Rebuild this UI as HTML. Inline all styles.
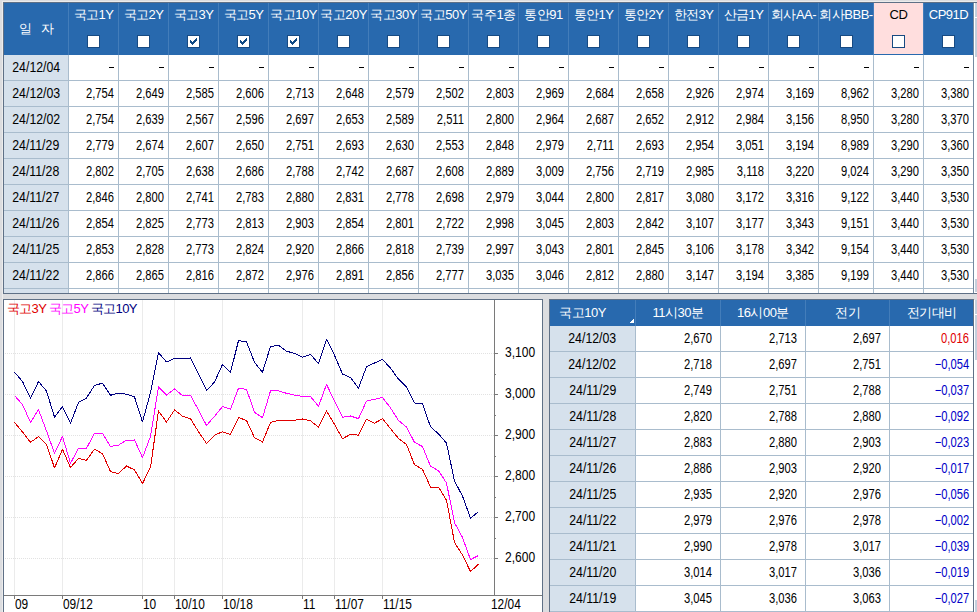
<!DOCTYPE html><html><head><meta charset="utf-8"><style>
html,body{margin:0;padding:0}
body{width:977px;height:612px;overflow:hidden;position:relative;background:#dcdde0;font-family:"Liberation Sans",sans-serif;}
body div{position:absolute;box-sizing:border-box}
.t{white-space:nowrap;font-size:13px;letter-spacing:-0.5px;color:#000}
.n{white-space:nowrap;font-size:14px;color:#000}
.r{text-align:right}
.c{text-align:center}
.cb{width:13px;height:13px;background:#fff;border:1px solid #174a82}
</style></head><body>

<div style="left:2px;top:1px;width:975px;height:300px;border-left:1px solid #ececec;border-top:1px solid #ececec"></div>
<div style="left:3px;top:2px;width:974px;height:292px;border-left:1px solid #5f7086;border-top:1px solid #5f7086;border-bottom:1px solid #5f7086"></div>
<div style="left:4px;top:3px;width:969px;height:290px;background:#fff"></div>
<div style="left:4px;top:3px;width:969px;height:52px;background:#2869ae"></div>
<div style="left:874px;top:3px;width:49px;height:51px;background:#ffdede"></div>
<div style="left:4px;top:55px;width:64px;height:238px;background:#d6e1ec"></div>
<div style="left:68px;top:3px;width:1px;height:52px;background:#437dba"></div>
<div style="left:68px;top:55px;width:1px;height:238px;background:#a9bccd"></div>
<div style="left:118px;top:3px;width:1px;height:52px;background:#437dba"></div>
<div style="left:118px;top:55px;width:1px;height:238px;background:#a9bccd"></div>
<div style="left:168px;top:3px;width:1px;height:52px;background:#437dba"></div>
<div style="left:168px;top:55px;width:1px;height:238px;background:#a9bccd"></div>
<div style="left:218px;top:3px;width:1px;height:52px;background:#437dba"></div>
<div style="left:218px;top:55px;width:1px;height:238px;background:#a9bccd"></div>
<div style="left:268px;top:3px;width:1px;height:52px;background:#437dba"></div>
<div style="left:268px;top:55px;width:1px;height:238px;background:#a9bccd"></div>
<div style="left:318px;top:3px;width:1px;height:52px;background:#437dba"></div>
<div style="left:318px;top:55px;width:1px;height:238px;background:#a9bccd"></div>
<div style="left:368px;top:3px;width:1px;height:52px;background:#437dba"></div>
<div style="left:368px;top:55px;width:1px;height:238px;background:#a9bccd"></div>
<div style="left:418px;top:3px;width:1px;height:52px;background:#437dba"></div>
<div style="left:418px;top:55px;width:1px;height:238px;background:#a9bccd"></div>
<div style="left:468px;top:3px;width:1px;height:52px;background:#437dba"></div>
<div style="left:468px;top:55px;width:1px;height:238px;background:#a9bccd"></div>
<div style="left:518px;top:3px;width:1px;height:52px;background:#437dba"></div>
<div style="left:518px;top:55px;width:1px;height:238px;background:#a9bccd"></div>
<div style="left:568px;top:3px;width:1px;height:52px;background:#437dba"></div>
<div style="left:568px;top:55px;width:1px;height:238px;background:#a9bccd"></div>
<div style="left:618px;top:3px;width:1px;height:52px;background:#437dba"></div>
<div style="left:618px;top:55px;width:1px;height:238px;background:#a9bccd"></div>
<div style="left:668px;top:3px;width:1px;height:52px;background:#437dba"></div>
<div style="left:668px;top:55px;width:1px;height:238px;background:#a9bccd"></div>
<div style="left:718px;top:3px;width:1px;height:52px;background:#437dba"></div>
<div style="left:718px;top:55px;width:1px;height:238px;background:#a9bccd"></div>
<div style="left:768px;top:3px;width:1px;height:52px;background:#437dba"></div>
<div style="left:768px;top:55px;width:1px;height:238px;background:#a9bccd"></div>
<div style="left:818px;top:3px;width:1px;height:52px;background:#437dba"></div>
<div style="left:818px;top:55px;width:1px;height:238px;background:#a9bccd"></div>
<div style="left:873px;top:3px;width:1px;height:52px;background:#437dba"></div>
<div style="left:873px;top:55px;width:1px;height:238px;background:#a9bccd"></div>
<div style="left:923px;top:3px;width:1px;height:52px;background:#437dba"></div>
<div style="left:923px;top:55px;width:1px;height:238px;background:#a9bccd"></div>
<div style="left:973px;top:3px;width:1px;height:52px;background:#437dba"></div>
<div style="left:973px;top:55px;width:1px;height:238px;background:#a9bccd"></div>
<div style="left:4px;top:80px;width:969px;height:1px;background:#a9bccd"></div>
<div style="left:4px;top:106px;width:969px;height:1px;background:#a9bccd"></div>
<div style="left:4px;top:132px;width:969px;height:1px;background:#a9bccd"></div>
<div style="left:4px;top:158px;width:969px;height:1px;background:#a9bccd"></div>
<div style="left:4px;top:184px;width:969px;height:1px;background:#a9bccd"></div>
<div style="left:4px;top:210px;width:969px;height:1px;background:#a9bccd"></div>
<div style="left:4px;top:236px;width:969px;height:1px;background:#a9bccd"></div>
<div style="left:4px;top:262px;width:969px;height:1px;background:#a9bccd"></div>
<div style="left:4px;top:288px;width:969px;height:1px;background:#a9bccd"></div>
<div style="left:973px;top:3px;width:4px;height:290px;background:#fff"></div>
<div style="left:973px;top:3px;width:1px;height:290px;background:#7389a0"></div>
<div style="left:975px;top:3px;width:2px;height:54px;background:#c5cfdc"></div>
<div style="left:975px;top:17px;width:2px;height:1px;background:#fff"></div>
<div style="left:975px;top:279px;width:2px;height:13px;background:#c5cfdc"></div>
<div class="t" style="left:69px;top:7px;width:49px;height:16px;line-height:16px;text-align:center;color:#fff">국고1Y</div>
<div class="cb" style="left:87px;top:35px"></div>
<div class="t" style="left:119px;top:7px;width:49px;height:16px;line-height:16px;text-align:center;color:#fff">국고2Y</div>
<div class="cb" style="left:137px;top:35px"></div>
<div class="t" style="left:169px;top:7px;width:49px;height:16px;line-height:16px;text-align:center;color:#fff">국고3Y</div>
<div class="cb" style="left:187px;top:35px"></div>
<svg style="position:absolute;left:187px;top:35px" width="13" height="13" shape-rendering="crispEdges" fill="#104a85"><rect x="3" y="5" width="1" height="3"/><rect x="4" y="6" width="1" height="3"/><rect x="5" y="7" width="1" height="3"/><rect x="6" y="6" width="1" height="3"/><rect x="7" y="5" width="1" height="3"/><rect x="8" y="4" width="1" height="3"/><rect x="9" y="3" width="1" height="3"/></svg>
<div class="t" style="left:219px;top:7px;width:49px;height:16px;line-height:16px;text-align:center;color:#fff">국고5Y</div>
<div class="cb" style="left:237px;top:35px"></div>
<svg style="position:absolute;left:237px;top:35px" width="13" height="13" shape-rendering="crispEdges" fill="#104a85"><rect x="3" y="5" width="1" height="3"/><rect x="4" y="6" width="1" height="3"/><rect x="5" y="7" width="1" height="3"/><rect x="6" y="6" width="1" height="3"/><rect x="7" y="5" width="1" height="3"/><rect x="8" y="4" width="1" height="3"/><rect x="9" y="3" width="1" height="3"/></svg>
<div class="t" style="left:269px;top:7px;width:49px;height:16px;line-height:16px;text-align:center;color:#fff">국고10Y</div>
<div class="cb" style="left:287px;top:35px"></div>
<svg style="position:absolute;left:287px;top:35px" width="13" height="13" shape-rendering="crispEdges" fill="#104a85"><rect x="3" y="5" width="1" height="3"/><rect x="4" y="6" width="1" height="3"/><rect x="5" y="7" width="1" height="3"/><rect x="6" y="6" width="1" height="3"/><rect x="7" y="5" width="1" height="3"/><rect x="8" y="4" width="1" height="3"/><rect x="9" y="3" width="1" height="3"/></svg>
<div class="t" style="left:319px;top:7px;width:49px;height:16px;line-height:16px;text-align:center;color:#fff">국고20Y</div>
<div class="cb" style="left:337px;top:35px"></div>
<div class="t" style="left:369px;top:7px;width:49px;height:16px;line-height:16px;text-align:center;color:#fff">국고30Y</div>
<div class="cb" style="left:387px;top:35px"></div>
<div class="t" style="left:419px;top:7px;width:49px;height:16px;line-height:16px;text-align:center;color:#fff">국고50Y</div>
<div class="cb" style="left:437px;top:35px"></div>
<div class="t" style="left:469px;top:7px;width:49px;height:16px;line-height:16px;text-align:center;color:#fff">국주1종</div>
<div class="cb" style="left:487px;top:35px"></div>
<div class="t" style="left:519px;top:7px;width:49px;height:16px;line-height:16px;text-align:center;color:#fff">통안91</div>
<div class="cb" style="left:537px;top:35px"></div>
<div class="t" style="left:569px;top:7px;width:49px;height:16px;line-height:16px;text-align:center;color:#fff">통안1Y</div>
<div class="cb" style="left:587px;top:35px"></div>
<div class="t" style="left:619px;top:7px;width:49px;height:16px;line-height:16px;text-align:center;color:#fff">통안2Y</div>
<div class="cb" style="left:637px;top:35px"></div>
<div class="t" style="left:669px;top:7px;width:49px;height:16px;line-height:16px;text-align:center;color:#fff">한전3Y</div>
<div class="cb" style="left:687px;top:35px"></div>
<div class="t" style="left:719px;top:7px;width:49px;height:16px;line-height:16px;text-align:center;color:#fff">산금1Y</div>
<div class="cb" style="left:737px;top:35px"></div>
<div class="t" style="left:769px;top:7px;width:49px;height:16px;line-height:16px;text-align:center;color:#fff">회사AA-</div>
<div class="cb" style="left:787px;top:35px"></div>
<div class="t" style="left:819px;top:7px;width:54px;height:16px;line-height:16px;text-align:center;color:#fff">회사BBB-</div>
<div class="cb" style="left:840px;top:35px"></div>
<div class="t" style="left:874px;top:7px;width:49px;height:16px;line-height:16px;text-align:center;color:#000">CD</div>
<div class="cb" style="left:892px;top:35px"></div>
<div class="t" style="left:924px;top:7px;width:49px;height:16px;line-height:16px;text-align:center;color:#fff">CP91D</div>
<div class="cb" style="left:942px;top:35px"></div>
<div class="t" style="left:4px;top:3px;width:64px;height:52px;line-height:52px;text-align:center;color:#fff">일&nbsp;&nbsp;&nbsp;자</div>
<div class="n" style="left:4px;top:55px;width:64px;height:25px;line-height:25px;text-align:center;"><span style="display:inline-block;transform:scaleX(0.88);transform-origin:50% 50%">24/12/04</span></div>
<div style="left:109px;top:67px;width:5px;height:1px;background:#000"></div>
<div style="left:159px;top:67px;width:5px;height:1px;background:#000"></div>
<div style="left:209px;top:67px;width:5px;height:1px;background:#000"></div>
<div style="left:259px;top:67px;width:5px;height:1px;background:#000"></div>
<div style="left:309px;top:67px;width:5px;height:1px;background:#000"></div>
<div style="left:359px;top:67px;width:5px;height:1px;background:#000"></div>
<div style="left:409px;top:67px;width:5px;height:1px;background:#000"></div>
<div style="left:459px;top:67px;width:5px;height:1px;background:#000"></div>
<div style="left:509px;top:67px;width:5px;height:1px;background:#000"></div>
<div style="left:559px;top:67px;width:5px;height:1px;background:#000"></div>
<div style="left:609px;top:67px;width:5px;height:1px;background:#000"></div>
<div style="left:659px;top:67px;width:5px;height:1px;background:#000"></div>
<div style="left:709px;top:67px;width:5px;height:1px;background:#000"></div>
<div style="left:759px;top:67px;width:5px;height:1px;background:#000"></div>
<div style="left:809px;top:67px;width:5px;height:1px;background:#000"></div>
<div style="left:864px;top:67px;width:5px;height:1px;background:#000"></div>
<div style="left:914px;top:67px;width:5px;height:1px;background:#000"></div>
<div style="left:964px;top:67px;width:5px;height:1px;background:#000"></div>
<div class="n" style="left:4px;top:81px;width:64px;height:25px;line-height:25px;text-align:center;"><span style="display:inline-block;transform:scaleX(0.88);transform-origin:50% 50%">24/12/03</span></div>
<div class="n" style="left:69px;top:81px;width:45px;height:25px;line-height:25px;text-align:right;"><span style="display:inline-block;transform:scaleX(0.8);transform-origin:100% 50%">2,754</span></div>
<div class="n" style="left:119px;top:81px;width:45px;height:25px;line-height:25px;text-align:right;"><span style="display:inline-block;transform:scaleX(0.8);transform-origin:100% 50%">2,649</span></div>
<div class="n" style="left:169px;top:81px;width:45px;height:25px;line-height:25px;text-align:right;"><span style="display:inline-block;transform:scaleX(0.8);transform-origin:100% 50%">2,585</span></div>
<div class="n" style="left:219px;top:81px;width:45px;height:25px;line-height:25px;text-align:right;"><span style="display:inline-block;transform:scaleX(0.8);transform-origin:100% 50%">2,606</span></div>
<div class="n" style="left:269px;top:81px;width:45px;height:25px;line-height:25px;text-align:right;"><span style="display:inline-block;transform:scaleX(0.8);transform-origin:100% 50%">2,713</span></div>
<div class="n" style="left:319px;top:81px;width:45px;height:25px;line-height:25px;text-align:right;"><span style="display:inline-block;transform:scaleX(0.8);transform-origin:100% 50%">2,648</span></div>
<div class="n" style="left:369px;top:81px;width:45px;height:25px;line-height:25px;text-align:right;"><span style="display:inline-block;transform:scaleX(0.8);transform-origin:100% 50%">2,579</span></div>
<div class="n" style="left:419px;top:81px;width:45px;height:25px;line-height:25px;text-align:right;"><span style="display:inline-block;transform:scaleX(0.8);transform-origin:100% 50%">2,502</span></div>
<div class="n" style="left:469px;top:81px;width:45px;height:25px;line-height:25px;text-align:right;"><span style="display:inline-block;transform:scaleX(0.8);transform-origin:100% 50%">2,803</span></div>
<div class="n" style="left:519px;top:81px;width:45px;height:25px;line-height:25px;text-align:right;"><span style="display:inline-block;transform:scaleX(0.8);transform-origin:100% 50%">2,969</span></div>
<div class="n" style="left:569px;top:81px;width:45px;height:25px;line-height:25px;text-align:right;"><span style="display:inline-block;transform:scaleX(0.8);transform-origin:100% 50%">2,684</span></div>
<div class="n" style="left:619px;top:81px;width:45px;height:25px;line-height:25px;text-align:right;"><span style="display:inline-block;transform:scaleX(0.8);transform-origin:100% 50%">2,658</span></div>
<div class="n" style="left:669px;top:81px;width:45px;height:25px;line-height:25px;text-align:right;"><span style="display:inline-block;transform:scaleX(0.8);transform-origin:100% 50%">2,926</span></div>
<div class="n" style="left:719px;top:81px;width:45px;height:25px;line-height:25px;text-align:right;"><span style="display:inline-block;transform:scaleX(0.8);transform-origin:100% 50%">2,974</span></div>
<div class="n" style="left:769px;top:81px;width:45px;height:25px;line-height:25px;text-align:right;"><span style="display:inline-block;transform:scaleX(0.8);transform-origin:100% 50%">3,169</span></div>
<div class="n" style="left:819px;top:81px;width:50px;height:25px;line-height:25px;text-align:right;"><span style="display:inline-block;transform:scaleX(0.8);transform-origin:100% 50%">8,962</span></div>
<div class="n" style="left:874px;top:81px;width:45px;height:25px;line-height:25px;text-align:right;"><span style="display:inline-block;transform:scaleX(0.8);transform-origin:100% 50%">3,280</span></div>
<div class="n" style="left:924px;top:81px;width:45px;height:25px;line-height:25px;text-align:right;"><span style="display:inline-block;transform:scaleX(0.8);transform-origin:100% 50%">3,380</span></div>
<div class="n" style="left:4px;top:107px;width:64px;height:25px;line-height:25px;text-align:center;"><span style="display:inline-block;transform:scaleX(0.88);transform-origin:50% 50%">24/12/02</span></div>
<div class="n" style="left:69px;top:107px;width:45px;height:25px;line-height:25px;text-align:right;"><span style="display:inline-block;transform:scaleX(0.8);transform-origin:100% 50%">2,754</span></div>
<div class="n" style="left:119px;top:107px;width:45px;height:25px;line-height:25px;text-align:right;"><span style="display:inline-block;transform:scaleX(0.8);transform-origin:100% 50%">2,639</span></div>
<div class="n" style="left:169px;top:107px;width:45px;height:25px;line-height:25px;text-align:right;"><span style="display:inline-block;transform:scaleX(0.8);transform-origin:100% 50%">2,567</span></div>
<div class="n" style="left:219px;top:107px;width:45px;height:25px;line-height:25px;text-align:right;"><span style="display:inline-block;transform:scaleX(0.8);transform-origin:100% 50%">2,596</span></div>
<div class="n" style="left:269px;top:107px;width:45px;height:25px;line-height:25px;text-align:right;"><span style="display:inline-block;transform:scaleX(0.8);transform-origin:100% 50%">2,697</span></div>
<div class="n" style="left:319px;top:107px;width:45px;height:25px;line-height:25px;text-align:right;"><span style="display:inline-block;transform:scaleX(0.8);transform-origin:100% 50%">2,653</span></div>
<div class="n" style="left:369px;top:107px;width:45px;height:25px;line-height:25px;text-align:right;"><span style="display:inline-block;transform:scaleX(0.8);transform-origin:100% 50%">2,589</span></div>
<div class="n" style="left:419px;top:107px;width:45px;height:25px;line-height:25px;text-align:right;"><span style="display:inline-block;transform:scaleX(0.8);transform-origin:100% 50%">2,511</span></div>
<div class="n" style="left:469px;top:107px;width:45px;height:25px;line-height:25px;text-align:right;"><span style="display:inline-block;transform:scaleX(0.8);transform-origin:100% 50%">2,800</span></div>
<div class="n" style="left:519px;top:107px;width:45px;height:25px;line-height:25px;text-align:right;"><span style="display:inline-block;transform:scaleX(0.8);transform-origin:100% 50%">2,964</span></div>
<div class="n" style="left:569px;top:107px;width:45px;height:25px;line-height:25px;text-align:right;"><span style="display:inline-block;transform:scaleX(0.8);transform-origin:100% 50%">2,687</span></div>
<div class="n" style="left:619px;top:107px;width:45px;height:25px;line-height:25px;text-align:right;"><span style="display:inline-block;transform:scaleX(0.8);transform-origin:100% 50%">2,652</span></div>
<div class="n" style="left:669px;top:107px;width:45px;height:25px;line-height:25px;text-align:right;"><span style="display:inline-block;transform:scaleX(0.8);transform-origin:100% 50%">2,912</span></div>
<div class="n" style="left:719px;top:107px;width:45px;height:25px;line-height:25px;text-align:right;"><span style="display:inline-block;transform:scaleX(0.8);transform-origin:100% 50%">2,984</span></div>
<div class="n" style="left:769px;top:107px;width:45px;height:25px;line-height:25px;text-align:right;"><span style="display:inline-block;transform:scaleX(0.8);transform-origin:100% 50%">3,156</span></div>
<div class="n" style="left:819px;top:107px;width:50px;height:25px;line-height:25px;text-align:right;"><span style="display:inline-block;transform:scaleX(0.8);transform-origin:100% 50%">8,950</span></div>
<div class="n" style="left:874px;top:107px;width:45px;height:25px;line-height:25px;text-align:right;"><span style="display:inline-block;transform:scaleX(0.8);transform-origin:100% 50%">3,280</span></div>
<div class="n" style="left:924px;top:107px;width:45px;height:25px;line-height:25px;text-align:right;"><span style="display:inline-block;transform:scaleX(0.8);transform-origin:100% 50%">3,370</span></div>
<div class="n" style="left:4px;top:133px;width:64px;height:25px;line-height:25px;text-align:center;"><span style="display:inline-block;transform:scaleX(0.88);transform-origin:50% 50%">24/11/29</span></div>
<div class="n" style="left:69px;top:133px;width:45px;height:25px;line-height:25px;text-align:right;"><span style="display:inline-block;transform:scaleX(0.8);transform-origin:100% 50%">2,779</span></div>
<div class="n" style="left:119px;top:133px;width:45px;height:25px;line-height:25px;text-align:right;"><span style="display:inline-block;transform:scaleX(0.8);transform-origin:100% 50%">2,674</span></div>
<div class="n" style="left:169px;top:133px;width:45px;height:25px;line-height:25px;text-align:right;"><span style="display:inline-block;transform:scaleX(0.8);transform-origin:100% 50%">2,607</span></div>
<div class="n" style="left:219px;top:133px;width:45px;height:25px;line-height:25px;text-align:right;"><span style="display:inline-block;transform:scaleX(0.8);transform-origin:100% 50%">2,650</span></div>
<div class="n" style="left:269px;top:133px;width:45px;height:25px;line-height:25px;text-align:right;"><span style="display:inline-block;transform:scaleX(0.8);transform-origin:100% 50%">2,751</span></div>
<div class="n" style="left:319px;top:133px;width:45px;height:25px;line-height:25px;text-align:right;"><span style="display:inline-block;transform:scaleX(0.8);transform-origin:100% 50%">2,693</span></div>
<div class="n" style="left:369px;top:133px;width:45px;height:25px;line-height:25px;text-align:right;"><span style="display:inline-block;transform:scaleX(0.8);transform-origin:100% 50%">2,630</span></div>
<div class="n" style="left:419px;top:133px;width:45px;height:25px;line-height:25px;text-align:right;"><span style="display:inline-block;transform:scaleX(0.8);transform-origin:100% 50%">2,553</span></div>
<div class="n" style="left:469px;top:133px;width:45px;height:25px;line-height:25px;text-align:right;"><span style="display:inline-block;transform:scaleX(0.8);transform-origin:100% 50%">2,848</span></div>
<div class="n" style="left:519px;top:133px;width:45px;height:25px;line-height:25px;text-align:right;"><span style="display:inline-block;transform:scaleX(0.8);transform-origin:100% 50%">2,979</span></div>
<div class="n" style="left:569px;top:133px;width:45px;height:25px;line-height:25px;text-align:right;"><span style="display:inline-block;transform:scaleX(0.8);transform-origin:100% 50%">2,711</span></div>
<div class="n" style="left:619px;top:133px;width:45px;height:25px;line-height:25px;text-align:right;"><span style="display:inline-block;transform:scaleX(0.8);transform-origin:100% 50%">2,693</span></div>
<div class="n" style="left:669px;top:133px;width:45px;height:25px;line-height:25px;text-align:right;"><span style="display:inline-block;transform:scaleX(0.8);transform-origin:100% 50%">2,954</span></div>
<div class="n" style="left:719px;top:133px;width:45px;height:25px;line-height:25px;text-align:right;"><span style="display:inline-block;transform:scaleX(0.8);transform-origin:100% 50%">3,051</span></div>
<div class="n" style="left:769px;top:133px;width:45px;height:25px;line-height:25px;text-align:right;"><span style="display:inline-block;transform:scaleX(0.8);transform-origin:100% 50%">3,194</span></div>
<div class="n" style="left:819px;top:133px;width:50px;height:25px;line-height:25px;text-align:right;"><span style="display:inline-block;transform:scaleX(0.8);transform-origin:100% 50%">8,989</span></div>
<div class="n" style="left:874px;top:133px;width:45px;height:25px;line-height:25px;text-align:right;"><span style="display:inline-block;transform:scaleX(0.8);transform-origin:100% 50%">3,290</span></div>
<div class="n" style="left:924px;top:133px;width:45px;height:25px;line-height:25px;text-align:right;"><span style="display:inline-block;transform:scaleX(0.8);transform-origin:100% 50%">3,360</span></div>
<div class="n" style="left:4px;top:159px;width:64px;height:25px;line-height:25px;text-align:center;"><span style="display:inline-block;transform:scaleX(0.88);transform-origin:50% 50%">24/11/28</span></div>
<div class="n" style="left:69px;top:159px;width:45px;height:25px;line-height:25px;text-align:right;"><span style="display:inline-block;transform:scaleX(0.8);transform-origin:100% 50%">2,802</span></div>
<div class="n" style="left:119px;top:159px;width:45px;height:25px;line-height:25px;text-align:right;"><span style="display:inline-block;transform:scaleX(0.8);transform-origin:100% 50%">2,705</span></div>
<div class="n" style="left:169px;top:159px;width:45px;height:25px;line-height:25px;text-align:right;"><span style="display:inline-block;transform:scaleX(0.8);transform-origin:100% 50%">2,638</span></div>
<div class="n" style="left:219px;top:159px;width:45px;height:25px;line-height:25px;text-align:right;"><span style="display:inline-block;transform:scaleX(0.8);transform-origin:100% 50%">2,686</span></div>
<div class="n" style="left:269px;top:159px;width:45px;height:25px;line-height:25px;text-align:right;"><span style="display:inline-block;transform:scaleX(0.8);transform-origin:100% 50%">2,788</span></div>
<div class="n" style="left:319px;top:159px;width:45px;height:25px;line-height:25px;text-align:right;"><span style="display:inline-block;transform:scaleX(0.8);transform-origin:100% 50%">2,742</span></div>
<div class="n" style="left:369px;top:159px;width:45px;height:25px;line-height:25px;text-align:right;"><span style="display:inline-block;transform:scaleX(0.8);transform-origin:100% 50%">2,687</span></div>
<div class="n" style="left:419px;top:159px;width:45px;height:25px;line-height:25px;text-align:right;"><span style="display:inline-block;transform:scaleX(0.8);transform-origin:100% 50%">2,608</span></div>
<div class="n" style="left:469px;top:159px;width:45px;height:25px;line-height:25px;text-align:right;"><span style="display:inline-block;transform:scaleX(0.8);transform-origin:100% 50%">2,889</span></div>
<div class="n" style="left:519px;top:159px;width:45px;height:25px;line-height:25px;text-align:right;"><span style="display:inline-block;transform:scaleX(0.8);transform-origin:100% 50%">3,009</span></div>
<div class="n" style="left:569px;top:159px;width:45px;height:25px;line-height:25px;text-align:right;"><span style="display:inline-block;transform:scaleX(0.8);transform-origin:100% 50%">2,756</span></div>
<div class="n" style="left:619px;top:159px;width:45px;height:25px;line-height:25px;text-align:right;"><span style="display:inline-block;transform:scaleX(0.8);transform-origin:100% 50%">2,719</span></div>
<div class="n" style="left:669px;top:159px;width:45px;height:25px;line-height:25px;text-align:right;"><span style="display:inline-block;transform:scaleX(0.8);transform-origin:100% 50%">2,985</span></div>
<div class="n" style="left:719px;top:159px;width:45px;height:25px;line-height:25px;text-align:right;"><span style="display:inline-block;transform:scaleX(0.8);transform-origin:100% 50%">3,118</span></div>
<div class="n" style="left:769px;top:159px;width:45px;height:25px;line-height:25px;text-align:right;"><span style="display:inline-block;transform:scaleX(0.8);transform-origin:100% 50%">3,220</span></div>
<div class="n" style="left:819px;top:159px;width:50px;height:25px;line-height:25px;text-align:right;"><span style="display:inline-block;transform:scaleX(0.8);transform-origin:100% 50%">9,024</span></div>
<div class="n" style="left:874px;top:159px;width:45px;height:25px;line-height:25px;text-align:right;"><span style="display:inline-block;transform:scaleX(0.8);transform-origin:100% 50%">3,290</span></div>
<div class="n" style="left:924px;top:159px;width:45px;height:25px;line-height:25px;text-align:right;"><span style="display:inline-block;transform:scaleX(0.8);transform-origin:100% 50%">3,350</span></div>
<div class="n" style="left:4px;top:185px;width:64px;height:25px;line-height:25px;text-align:center;"><span style="display:inline-block;transform:scaleX(0.88);transform-origin:50% 50%">24/11/27</span></div>
<div class="n" style="left:69px;top:185px;width:45px;height:25px;line-height:25px;text-align:right;"><span style="display:inline-block;transform:scaleX(0.8);transform-origin:100% 50%">2,846</span></div>
<div class="n" style="left:119px;top:185px;width:45px;height:25px;line-height:25px;text-align:right;"><span style="display:inline-block;transform:scaleX(0.8);transform-origin:100% 50%">2,800</span></div>
<div class="n" style="left:169px;top:185px;width:45px;height:25px;line-height:25px;text-align:right;"><span style="display:inline-block;transform:scaleX(0.8);transform-origin:100% 50%">2,741</span></div>
<div class="n" style="left:219px;top:185px;width:45px;height:25px;line-height:25px;text-align:right;"><span style="display:inline-block;transform:scaleX(0.8);transform-origin:100% 50%">2,783</span></div>
<div class="n" style="left:269px;top:185px;width:45px;height:25px;line-height:25px;text-align:right;"><span style="display:inline-block;transform:scaleX(0.8);transform-origin:100% 50%">2,880</span></div>
<div class="n" style="left:319px;top:185px;width:45px;height:25px;line-height:25px;text-align:right;"><span style="display:inline-block;transform:scaleX(0.8);transform-origin:100% 50%">2,831</span></div>
<div class="n" style="left:369px;top:185px;width:45px;height:25px;line-height:25px;text-align:right;"><span style="display:inline-block;transform:scaleX(0.8);transform-origin:100% 50%">2,778</span></div>
<div class="n" style="left:419px;top:185px;width:45px;height:25px;line-height:25px;text-align:right;"><span style="display:inline-block;transform:scaleX(0.8);transform-origin:100% 50%">2,698</span></div>
<div class="n" style="left:469px;top:185px;width:45px;height:25px;line-height:25px;text-align:right;"><span style="display:inline-block;transform:scaleX(0.8);transform-origin:100% 50%">2,979</span></div>
<div class="n" style="left:519px;top:185px;width:45px;height:25px;line-height:25px;text-align:right;"><span style="display:inline-block;transform:scaleX(0.8);transform-origin:100% 50%">3,044</span></div>
<div class="n" style="left:569px;top:185px;width:45px;height:25px;line-height:25px;text-align:right;"><span style="display:inline-block;transform:scaleX(0.8);transform-origin:100% 50%">2,800</span></div>
<div class="n" style="left:619px;top:185px;width:45px;height:25px;line-height:25px;text-align:right;"><span style="display:inline-block;transform:scaleX(0.8);transform-origin:100% 50%">2,817</span></div>
<div class="n" style="left:669px;top:185px;width:45px;height:25px;line-height:25px;text-align:right;"><span style="display:inline-block;transform:scaleX(0.8);transform-origin:100% 50%">3,080</span></div>
<div class="n" style="left:719px;top:185px;width:45px;height:25px;line-height:25px;text-align:right;"><span style="display:inline-block;transform:scaleX(0.8);transform-origin:100% 50%">3,172</span></div>
<div class="n" style="left:769px;top:185px;width:45px;height:25px;line-height:25px;text-align:right;"><span style="display:inline-block;transform:scaleX(0.8);transform-origin:100% 50%">3,316</span></div>
<div class="n" style="left:819px;top:185px;width:50px;height:25px;line-height:25px;text-align:right;"><span style="display:inline-block;transform:scaleX(0.8);transform-origin:100% 50%">9,122</span></div>
<div class="n" style="left:874px;top:185px;width:45px;height:25px;line-height:25px;text-align:right;"><span style="display:inline-block;transform:scaleX(0.8);transform-origin:100% 50%">3,440</span></div>
<div class="n" style="left:924px;top:185px;width:45px;height:25px;line-height:25px;text-align:right;"><span style="display:inline-block;transform:scaleX(0.8);transform-origin:100% 50%">3,530</span></div>
<div class="n" style="left:4px;top:211px;width:64px;height:25px;line-height:25px;text-align:center;"><span style="display:inline-block;transform:scaleX(0.88);transform-origin:50% 50%">24/11/26</span></div>
<div class="n" style="left:69px;top:211px;width:45px;height:25px;line-height:25px;text-align:right;"><span style="display:inline-block;transform:scaleX(0.8);transform-origin:100% 50%">2,854</span></div>
<div class="n" style="left:119px;top:211px;width:45px;height:25px;line-height:25px;text-align:right;"><span style="display:inline-block;transform:scaleX(0.8);transform-origin:100% 50%">2,825</span></div>
<div class="n" style="left:169px;top:211px;width:45px;height:25px;line-height:25px;text-align:right;"><span style="display:inline-block;transform:scaleX(0.8);transform-origin:100% 50%">2,773</span></div>
<div class="n" style="left:219px;top:211px;width:45px;height:25px;line-height:25px;text-align:right;"><span style="display:inline-block;transform:scaleX(0.8);transform-origin:100% 50%">2,813</span></div>
<div class="n" style="left:269px;top:211px;width:45px;height:25px;line-height:25px;text-align:right;"><span style="display:inline-block;transform:scaleX(0.8);transform-origin:100% 50%">2,903</span></div>
<div class="n" style="left:319px;top:211px;width:45px;height:25px;line-height:25px;text-align:right;"><span style="display:inline-block;transform:scaleX(0.8);transform-origin:100% 50%">2,854</span></div>
<div class="n" style="left:369px;top:211px;width:45px;height:25px;line-height:25px;text-align:right;"><span style="display:inline-block;transform:scaleX(0.8);transform-origin:100% 50%">2,801</span></div>
<div class="n" style="left:419px;top:211px;width:45px;height:25px;line-height:25px;text-align:right;"><span style="display:inline-block;transform:scaleX(0.8);transform-origin:100% 50%">2,722</span></div>
<div class="n" style="left:469px;top:211px;width:45px;height:25px;line-height:25px;text-align:right;"><span style="display:inline-block;transform:scaleX(0.8);transform-origin:100% 50%">2,998</span></div>
<div class="n" style="left:519px;top:211px;width:45px;height:25px;line-height:25px;text-align:right;"><span style="display:inline-block;transform:scaleX(0.8);transform-origin:100% 50%">3,045</span></div>
<div class="n" style="left:569px;top:211px;width:45px;height:25px;line-height:25px;text-align:right;"><span style="display:inline-block;transform:scaleX(0.8);transform-origin:100% 50%">2,803</span></div>
<div class="n" style="left:619px;top:211px;width:45px;height:25px;line-height:25px;text-align:right;"><span style="display:inline-block;transform:scaleX(0.8);transform-origin:100% 50%">2,842</span></div>
<div class="n" style="left:669px;top:211px;width:45px;height:25px;line-height:25px;text-align:right;"><span style="display:inline-block;transform:scaleX(0.8);transform-origin:100% 50%">3,107</span></div>
<div class="n" style="left:719px;top:211px;width:45px;height:25px;line-height:25px;text-align:right;"><span style="display:inline-block;transform:scaleX(0.8);transform-origin:100% 50%">3,177</span></div>
<div class="n" style="left:769px;top:211px;width:45px;height:25px;line-height:25px;text-align:right;"><span style="display:inline-block;transform:scaleX(0.8);transform-origin:100% 50%">3,343</span></div>
<div class="n" style="left:819px;top:211px;width:50px;height:25px;line-height:25px;text-align:right;"><span style="display:inline-block;transform:scaleX(0.8);transform-origin:100% 50%">9,151</span></div>
<div class="n" style="left:874px;top:211px;width:45px;height:25px;line-height:25px;text-align:right;"><span style="display:inline-block;transform:scaleX(0.8);transform-origin:100% 50%">3,440</span></div>
<div class="n" style="left:924px;top:211px;width:45px;height:25px;line-height:25px;text-align:right;"><span style="display:inline-block;transform:scaleX(0.8);transform-origin:100% 50%">3,530</span></div>
<div class="n" style="left:4px;top:237px;width:64px;height:25px;line-height:25px;text-align:center;"><span style="display:inline-block;transform:scaleX(0.88);transform-origin:50% 50%">24/11/25</span></div>
<div class="n" style="left:69px;top:237px;width:45px;height:25px;line-height:25px;text-align:right;"><span style="display:inline-block;transform:scaleX(0.8);transform-origin:100% 50%">2,853</span></div>
<div class="n" style="left:119px;top:237px;width:45px;height:25px;line-height:25px;text-align:right;"><span style="display:inline-block;transform:scaleX(0.8);transform-origin:100% 50%">2,828</span></div>
<div class="n" style="left:169px;top:237px;width:45px;height:25px;line-height:25px;text-align:right;"><span style="display:inline-block;transform:scaleX(0.8);transform-origin:100% 50%">2,773</span></div>
<div class="n" style="left:219px;top:237px;width:45px;height:25px;line-height:25px;text-align:right;"><span style="display:inline-block;transform:scaleX(0.8);transform-origin:100% 50%">2,824</span></div>
<div class="n" style="left:269px;top:237px;width:45px;height:25px;line-height:25px;text-align:right;"><span style="display:inline-block;transform:scaleX(0.8);transform-origin:100% 50%">2,920</span></div>
<div class="n" style="left:319px;top:237px;width:45px;height:25px;line-height:25px;text-align:right;"><span style="display:inline-block;transform:scaleX(0.8);transform-origin:100% 50%">2,866</span></div>
<div class="n" style="left:369px;top:237px;width:45px;height:25px;line-height:25px;text-align:right;"><span style="display:inline-block;transform:scaleX(0.8);transform-origin:100% 50%">2,818</span></div>
<div class="n" style="left:419px;top:237px;width:45px;height:25px;line-height:25px;text-align:right;"><span style="display:inline-block;transform:scaleX(0.8);transform-origin:100% 50%">2,739</span></div>
<div class="n" style="left:469px;top:237px;width:45px;height:25px;line-height:25px;text-align:right;"><span style="display:inline-block;transform:scaleX(0.8);transform-origin:100% 50%">2,997</span></div>
<div class="n" style="left:519px;top:237px;width:45px;height:25px;line-height:25px;text-align:right;"><span style="display:inline-block;transform:scaleX(0.8);transform-origin:100% 50%">3,043</span></div>
<div class="n" style="left:569px;top:237px;width:45px;height:25px;line-height:25px;text-align:right;"><span style="display:inline-block;transform:scaleX(0.8);transform-origin:100% 50%">2,801</span></div>
<div class="n" style="left:619px;top:237px;width:45px;height:25px;line-height:25px;text-align:right;"><span style="display:inline-block;transform:scaleX(0.8);transform-origin:100% 50%">2,845</span></div>
<div class="n" style="left:669px;top:237px;width:45px;height:25px;line-height:25px;text-align:right;"><span style="display:inline-block;transform:scaleX(0.8);transform-origin:100% 50%">3,106</span></div>
<div class="n" style="left:719px;top:237px;width:45px;height:25px;line-height:25px;text-align:right;"><span style="display:inline-block;transform:scaleX(0.8);transform-origin:100% 50%">3,178</span></div>
<div class="n" style="left:769px;top:237px;width:45px;height:25px;line-height:25px;text-align:right;"><span style="display:inline-block;transform:scaleX(0.8);transform-origin:100% 50%">3,342</span></div>
<div class="n" style="left:819px;top:237px;width:50px;height:25px;line-height:25px;text-align:right;"><span style="display:inline-block;transform:scaleX(0.8);transform-origin:100% 50%">9,154</span></div>
<div class="n" style="left:874px;top:237px;width:45px;height:25px;line-height:25px;text-align:right;"><span style="display:inline-block;transform:scaleX(0.8);transform-origin:100% 50%">3,440</span></div>
<div class="n" style="left:924px;top:237px;width:45px;height:25px;line-height:25px;text-align:right;"><span style="display:inline-block;transform:scaleX(0.8);transform-origin:100% 50%">3,530</span></div>
<div class="n" style="left:4px;top:263px;width:64px;height:25px;line-height:25px;text-align:center;"><span style="display:inline-block;transform:scaleX(0.88);transform-origin:50% 50%">24/11/22</span></div>
<div class="n" style="left:69px;top:263px;width:45px;height:25px;line-height:25px;text-align:right;"><span style="display:inline-block;transform:scaleX(0.8);transform-origin:100% 50%">2,866</span></div>
<div class="n" style="left:119px;top:263px;width:45px;height:25px;line-height:25px;text-align:right;"><span style="display:inline-block;transform:scaleX(0.8);transform-origin:100% 50%">2,865</span></div>
<div class="n" style="left:169px;top:263px;width:45px;height:25px;line-height:25px;text-align:right;"><span style="display:inline-block;transform:scaleX(0.8);transform-origin:100% 50%">2,816</span></div>
<div class="n" style="left:219px;top:263px;width:45px;height:25px;line-height:25px;text-align:right;"><span style="display:inline-block;transform:scaleX(0.8);transform-origin:100% 50%">2,872</span></div>
<div class="n" style="left:269px;top:263px;width:45px;height:25px;line-height:25px;text-align:right;"><span style="display:inline-block;transform:scaleX(0.8);transform-origin:100% 50%">2,976</span></div>
<div class="n" style="left:319px;top:263px;width:45px;height:25px;line-height:25px;text-align:right;"><span style="display:inline-block;transform:scaleX(0.8);transform-origin:100% 50%">2,891</span></div>
<div class="n" style="left:369px;top:263px;width:45px;height:25px;line-height:25px;text-align:right;"><span style="display:inline-block;transform:scaleX(0.8);transform-origin:100% 50%">2,856</span></div>
<div class="n" style="left:419px;top:263px;width:45px;height:25px;line-height:25px;text-align:right;"><span style="display:inline-block;transform:scaleX(0.8);transform-origin:100% 50%">2,777</span></div>
<div class="n" style="left:469px;top:263px;width:45px;height:25px;line-height:25px;text-align:right;"><span style="display:inline-block;transform:scaleX(0.8);transform-origin:100% 50%">3,035</span></div>
<div class="n" style="left:519px;top:263px;width:45px;height:25px;line-height:25px;text-align:right;"><span style="display:inline-block;transform:scaleX(0.8);transform-origin:100% 50%">3,046</span></div>
<div class="n" style="left:569px;top:263px;width:45px;height:25px;line-height:25px;text-align:right;"><span style="display:inline-block;transform:scaleX(0.8);transform-origin:100% 50%">2,812</span></div>
<div class="n" style="left:619px;top:263px;width:45px;height:25px;line-height:25px;text-align:right;"><span style="display:inline-block;transform:scaleX(0.8);transform-origin:100% 50%">2,880</span></div>
<div class="n" style="left:669px;top:263px;width:45px;height:25px;line-height:25px;text-align:right;"><span style="display:inline-block;transform:scaleX(0.8);transform-origin:100% 50%">3,147</span></div>
<div class="n" style="left:719px;top:263px;width:45px;height:25px;line-height:25px;text-align:right;"><span style="display:inline-block;transform:scaleX(0.8);transform-origin:100% 50%">3,194</span></div>
<div class="n" style="left:769px;top:263px;width:45px;height:25px;line-height:25px;text-align:right;"><span style="display:inline-block;transform:scaleX(0.8);transform-origin:100% 50%">3,385</span></div>
<div class="n" style="left:819px;top:263px;width:50px;height:25px;line-height:25px;text-align:right;"><span style="display:inline-block;transform:scaleX(0.8);transform-origin:100% 50%">9,199</span></div>
<div class="n" style="left:874px;top:263px;width:45px;height:25px;line-height:25px;text-align:right;"><span style="display:inline-block;transform:scaleX(0.8);transform-origin:100% 50%">3,440</span></div>
<div class="n" style="left:924px;top:263px;width:45px;height:25px;line-height:25px;text-align:right;"><span style="display:inline-block;transform:scaleX(0.8);transform-origin:100% 50%">3,530</span></div>
<div style="left:2px;top:298px;width:1px;height:314px;background:#ececec"></div>
<div style="left:3px;top:299px;width:540px;height:313px;border-left:1px solid #5f7086;border-top:1px solid #5f7086;border-right:1px solid #5f7086;background:#fff"></div>
<svg style="position:absolute;left:0;top:0" width="977" height="612"><line x1="14.5" y1="300" x2="14.5" y2="595" stroke="#ebebeb" stroke-width="1"/><line x1="62.5" y1="300" x2="62.5" y2="595" stroke="#ebebeb" stroke-width="1"/><line x1="142.5" y1="300" x2="142.5" y2="595" stroke="#ebebeb" stroke-width="1"/><line x1="174.5" y1="300" x2="174.5" y2="595" stroke="#ebebeb" stroke-width="1"/><line x1="222.5" y1="300" x2="222.5" y2="595" stroke="#ebebeb" stroke-width="1"/><line x1="302.5" y1="300" x2="302.5" y2="595" stroke="#ebebeb" stroke-width="1"/><line x1="334.5" y1="300" x2="334.5" y2="595" stroke="#ebebeb" stroke-width="1"/><line x1="382.5" y1="300" x2="382.5" y2="595" stroke="#ebebeb" stroke-width="1"/><line x1="5" y1="353.5" x2="494" y2="353.5" stroke="#e2e2e2" stroke-width="1" stroke-dasharray="1 1"/><line x1="5" y1="394.5" x2="494" y2="394.5" stroke="#e2e2e2" stroke-width="1" stroke-dasharray="1 1"/><line x1="5" y1="435.5" x2="494" y2="435.5" stroke="#e2e2e2" stroke-width="1" stroke-dasharray="1 1"/><line x1="5" y1="476.5" x2="494" y2="476.5" stroke="#e2e2e2" stroke-width="1" stroke-dasharray="1 1"/><line x1="5" y1="517.5" x2="494" y2="517.5" stroke="#e2e2e2" stroke-width="1" stroke-dasharray="1 1"/><line x1="5" y1="558.5" x2="494" y2="558.5" stroke="#e2e2e2" stroke-width="1" stroke-dasharray="1 1"/><line x1="494.5" y1="300" x2="494.5" y2="596" stroke="#7a7a7a" stroke-width="1"/><line x1="4" y1="595.5" x2="542" y2="595.5" stroke="#7a7a7a" stroke-width="1"/><line x1="495" y1="353.5" x2="498" y2="353.5" stroke="#7a7a7a" stroke-width="1"/><line x1="495" y1="394.5" x2="498" y2="394.5" stroke="#7a7a7a" stroke-width="1"/><line x1="495" y1="435.5" x2="498" y2="435.5" stroke="#7a7a7a" stroke-width="1"/><line x1="495" y1="476.5" x2="498" y2="476.5" stroke="#7a7a7a" stroke-width="1"/><line x1="495" y1="517.5" x2="498" y2="517.5" stroke="#7a7a7a" stroke-width="1"/><line x1="495" y1="558.5" x2="498" y2="558.5" stroke="#7a7a7a" stroke-width="1"/><line x1="495" y1="374.5" x2="496" y2="374.5" stroke="#7a7a7a" stroke-width="1"/><line x1="495" y1="415.5" x2="496" y2="415.5" stroke="#7a7a7a" stroke-width="1"/><line x1="495" y1="456.5" x2="496" y2="456.5" stroke="#7a7a7a" stroke-width="1"/><line x1="495" y1="497.5" x2="496" y2="497.5" stroke="#7a7a7a" stroke-width="1"/><line x1="495" y1="538.5" x2="496" y2="538.5" stroke="#7a7a7a" stroke-width="1"/><line x1="14.5" y1="596" x2="14.5" y2="599" stroke="#7a7a7a" stroke-width="1"/><line x1="62.5" y1="596" x2="62.5" y2="599" stroke="#7a7a7a" stroke-width="1"/><line x1="142.5" y1="596" x2="142.5" y2="599" stroke="#7a7a7a" stroke-width="1"/><line x1="174.5" y1="596" x2="174.5" y2="599" stroke="#7a7a7a" stroke-width="1"/><line x1="222.5" y1="596" x2="222.5" y2="599" stroke="#7a7a7a" stroke-width="1"/><line x1="302.5" y1="596" x2="302.5" y2="599" stroke="#7a7a7a" stroke-width="1"/><line x1="334.5" y1="596" x2="334.5" y2="599" stroke="#7a7a7a" stroke-width="1"/><line x1="382.5" y1="596" x2="382.5" y2="599" stroke="#7a7a7a" stroke-width="1"/><polyline points="14.5,422.3 22.5,432.0 30.5,442.3 38.5,436.5 46.5,444.2 54.5,468.0 62.5,449.4 70.5,467.5 78.5,458.5 86.5,460.3 94.5,449.2 102.5,453.7 110.5,471.7 118.5,473.5 126.5,466.0 134.5,469.9 142.5,483.5 150.5,467.2 158.5,411.0 166.5,422.1 174.5,409.9 182.5,416.2 190.5,418.7 198.5,431.7 206.5,443.4 214.5,435.3 222.5,431.7 230.5,434.4 238.5,417.6 246.5,420.4 254.5,437.7 262.5,442.0 270.5,422.5 278.5,420.2 286.5,420.2 294.5,420.2 302.5,419.0 310.5,420.8 318.5,427.1 326.5,410.9 334.5,424.4 342.5,438.7 350.5,434.4 358.5,435.2 366.5,419.1 374.5,423.2 382.5,418.7 390.5,428.6 398.5,438.5 406.5,444.5 414.5,464.7 422.5,469.4 430.5,487.1 438.5,487.1 446.5,500.2 454.5,542.4 462.5,555.1 470.5,571.5 478.5,564.2" fill="none" stroke="#e00000" stroke-width="1" stroke-linejoin="round" shape-rendering="crispEdges"/><polyline points="14.5,395.6 22.5,404.5 30.5,422.5 38.5,409.6 46.5,431.0 54.5,453.1 62.5,436.5 70.5,463.3 78.5,448.3 86.5,448.3 94.5,433.4 102.5,433.4 110.5,446.5 118.5,445.1 126.5,440.2 134.5,440.0 142.5,457.6 150.5,436.5 158.5,387.0 166.5,395.1 174.5,389.0 182.5,395.6 190.5,395.4 198.5,410.1 206.5,425.4 214.5,416.4 222.5,406.5 230.5,409.2 238.5,388.3 246.5,389.3 254.5,412.3 262.5,417.8 270.5,390.8 278.5,390.8 286.5,393.3 294.5,395.1 302.5,396.5 310.5,396.5 318.5,406.4 326.5,384.3 334.5,401.0 342.5,417.2 350.5,416.0 358.5,418.7 366.5,401.1 374.5,399.3 382.5,397.5 390.5,407.9 398.5,420.5 406.5,427.0 414.5,442.4 422.5,446.5 430.5,466.2 438.5,470.7 446.5,483.0 454.5,522.7 462.5,537.5 470.5,559.6 478.5,555.5" fill="none" stroke="#ff00ff" stroke-width="1" stroke-linejoin="round" shape-rendering="crispEdges"/><polyline points="14.5,372.2 22.5,381.5 30.5,398.3 38.5,381.5 46.5,391.1 54.5,417.1 62.5,406.7 70.5,423.3 78.5,402.5 86.5,398.0 94.5,385.4 102.5,383.2 110.5,395.3 118.5,393.1 126.5,394.2 134.5,396.9 142.5,422.0 150.5,392.5 158.5,352.7 166.5,362.0 174.5,358.4 182.5,359.0 190.5,358.0 198.5,374.2 206.5,390.3 214.5,382.2 222.5,364.3 230.5,372.4 238.5,340.6 246.5,341.7 254.5,362.4 262.5,372.2 270.5,346.5 278.5,345.3 286.5,351.2 294.5,353.4 302.5,357.3 310.5,354.3 318.5,363.8 326.5,339.3 334.5,355.2 342.5,374.0 350.5,377.5 358.5,388.1 366.5,366.6 374.5,363.0 382.5,359.4 390.5,368.2 398.5,379.2 406.5,387.0 414.5,403.0 422.5,403.8 430.5,426.8 438.5,433.8 446.5,443.2 454.5,480.9 462.5,496.1 470.5,518.2 478.5,511.7" fill="none" stroke="#000080" stroke-width="1" stroke-linejoin="round" shape-rendering="crispEdges"/></svg>
<div class="t" style="left:7px;top:301px;width:40px;height:16px;line-height:16px;color:#e00000;letter-spacing:-0.7px">국고3Y</div>
<div class="t" style="left:49px;top:301px;width:40px;height:16px;line-height:16px;color:#ff00ff;letter-spacing:-0.7px">국고5Y</div>
<div class="t" style="left:91px;top:301px;width:50px;height:16px;line-height:16px;color:#000080;letter-spacing:-0.7px">국고10Y</div>
<div class="n" style="left:505px;top:340px;width:34px;height:25px;line-height:25px;text-align:left"><span style="display:inline-block;transform:scaleX(0.86);transform-origin:0% 50%">3,100</span></div>
<div class="n" style="left:505px;top:381px;width:34px;height:25px;line-height:25px;text-align:left"><span style="display:inline-block;transform:scaleX(0.86);transform-origin:0% 50%">3,000</span></div>
<div class="n" style="left:505px;top:422px;width:34px;height:25px;line-height:25px;text-align:left"><span style="display:inline-block;transform:scaleX(0.86);transform-origin:0% 50%">2,900</span></div>
<div class="n" style="left:505px;top:463px;width:34px;height:25px;line-height:25px;text-align:left"><span style="display:inline-block;transform:scaleX(0.86);transform-origin:0% 50%">2,800</span></div>
<div class="n" style="left:505px;top:504px;width:34px;height:25px;line-height:25px;text-align:left"><span style="display:inline-block;transform:scaleX(0.86);transform-origin:0% 50%">2,700</span></div>
<div class="n" style="left:505px;top:545px;width:34px;height:25px;line-height:25px;text-align:left"><span style="display:inline-block;transform:scaleX(0.86);transform-origin:0% 50%">2,600</span></div>
<div class="n" style="left:15px;top:592px;width:40px;height:25px;line-height:25px;text-align:left"><span style="display:inline-block;transform:scaleX(0.85);transform-origin:0% 50%">09</span></div>
<div class="n" style="left:63px;top:592px;width:40px;height:25px;line-height:25px;text-align:left"><span style="display:inline-block;transform:scaleX(0.85);transform-origin:0% 50%">09/12</span></div>
<div class="n" style="left:143px;top:592px;width:40px;height:25px;line-height:25px;text-align:left"><span style="display:inline-block;transform:scaleX(0.85);transform-origin:0% 50%">10</span></div>
<div class="n" style="left:175px;top:592px;width:40px;height:25px;line-height:25px;text-align:left"><span style="display:inline-block;transform:scaleX(0.85);transform-origin:0% 50%">10/10</span></div>
<div class="n" style="left:223px;top:592px;width:40px;height:25px;line-height:25px;text-align:left"><span style="display:inline-block;transform:scaleX(0.85);transform-origin:0% 50%">10/18</span></div>
<div class="n" style="left:303px;top:592px;width:40px;height:25px;line-height:25px;text-align:left"><span style="display:inline-block;transform:scaleX(0.85);transform-origin:0% 50%">11</span></div>
<div class="n" style="left:335px;top:592px;width:40px;height:25px;line-height:25px;text-align:left"><span style="display:inline-block;transform:scaleX(0.85);transform-origin:0% 50%">11/07</span></div>
<div class="n" style="left:383px;top:592px;width:40px;height:25px;line-height:25px;text-align:left"><span style="display:inline-block;transform:scaleX(0.85);transform-origin:0% 50%">11/15</span></div>
<div class="n" style="left:491px;top:592px;width:40px;height:25px;line-height:25px;text-align:left"><span style="display:inline-block;transform:scaleX(0.85);transform-origin:0% 50%">12/04</span></div>
<div style="left:549px;top:299px;width:425px;height:313px;border-left:1px solid #5f7086;border-top:1px solid #5f7086;border-right:1px solid #5f7086;background:#fff"></div>
<div style="left:550px;top:300px;width:423px;height:26px;background:#2869ae"></div>
<div style="left:550px;top:326px;width:85px;height:286px;background:#d6e1ec"></div>
<div style="left:635px;top:300px;width:1px;height:26px;background:#437dba"></div>
<div style="left:635px;top:326px;width:1px;height:286px;background:#a9bccd"></div>
<div style="left:720px;top:300px;width:1px;height:26px;background:#437dba"></div>
<div style="left:720px;top:326px;width:1px;height:286px;background:#a9bccd"></div>
<div style="left:805px;top:300px;width:1px;height:26px;background:#437dba"></div>
<div style="left:805px;top:326px;width:1px;height:286px;background:#a9bccd"></div>
<div style="left:889px;top:300px;width:1px;height:26px;background:#437dba"></div>
<div style="left:889px;top:326px;width:1px;height:286px;background:#a9bccd"></div>
<div style="left:550px;top:351px;width:423px;height:1px;background:#a9bccd"></div>
<div style="left:550px;top:377px;width:423px;height:1px;background:#a9bccd"></div>
<div style="left:550px;top:403px;width:423px;height:1px;background:#a9bccd"></div>
<div style="left:550px;top:429px;width:423px;height:1px;background:#a9bccd"></div>
<div style="left:550px;top:455px;width:423px;height:1px;background:#a9bccd"></div>
<div style="left:550px;top:481px;width:423px;height:1px;background:#a9bccd"></div>
<div style="left:550px;top:507px;width:423px;height:1px;background:#a9bccd"></div>
<div style="left:550px;top:533px;width:423px;height:1px;background:#a9bccd"></div>
<div style="left:550px;top:559px;width:423px;height:1px;background:#a9bccd"></div>
<div style="left:550px;top:585px;width:423px;height:1px;background:#a9bccd"></div>
<div style="left:550px;top:611px;width:423px;height:1px;background:#a9bccd"></div>
<div style="left:974px;top:300px;width:3px;height:312px;background:#fff"></div>
<div style="left:975px;top:300px;width:2px;height:60px;background:#c5cfdc"></div>
<div style="left:975px;top:314px;width:2px;height:1px;background:#fff"></div>
<div style="left:975px;top:600px;width:2px;height:12px;background:#c5cfdc"></div>
<div class="t" style="left:550px;top:300px;width:65px;height:25px;line-height:25px;text-align:center;color:#fff">국고10Y</div>
<div class="t" style="left:636px;top:300px;width:84px;height:25px;line-height:25px;text-align:center;color:#fff">11시30분</div>
<div class="t" style="left:721px;top:300px;width:84px;height:25px;line-height:25px;text-align:center;color:#fff">16시00분</div>
<div class="t" style="left:806px;top:300px;width:83px;height:25px;line-height:25px;text-align:center;color:#fff">전기</div>
<div class="t" style="left:890px;top:300px;width:83px;height:25px;line-height:25px;text-align:center;color:#fff">전기대비</div>
<div style="left:633px;top:319px;width:1px;height:1px;background:#fff"></div>
<div style="left:632px;top:320px;width:2px;height:1px;background:#fff"></div>
<div style="left:631px;top:321px;width:3px;height:1px;background:#fff"></div>
<div style="left:630px;top:322px;width:4px;height:1px;background:#fff"></div>
<div class="n" style="left:550px;top:326px;width:85px;height:25px;line-height:25px;text-align:center;"><span style="display:inline-block;transform:scaleX(0.88);transform-origin:50% 50%">24/12/03</span></div>
<div class="n" style="left:636px;top:326px;width:76px;height:25px;line-height:25px;text-align:right;color:#000"><span style="display:inline-block;transform:scaleX(0.8);transform-origin:100% 50%">2,670</span></div>
<div class="n" style="left:721px;top:326px;width:76px;height:25px;line-height:25px;text-align:right;color:#000"><span style="display:inline-block;transform:scaleX(0.8);transform-origin:100% 50%">2,713</span></div>
<div class="n" style="left:806px;top:326px;width:75px;height:25px;line-height:25px;text-align:right;color:#000"><span style="display:inline-block;transform:scaleX(0.8);transform-origin:100% 50%">2,697</span></div>
<div class="n" style="left:890px;top:326px;width:79px;height:25px;line-height:25px;text-align:right;color:#e00000"><span style="display:inline-block;transform:scaleX(0.8);transform-origin:100% 50%">0,016</span></div>
<div class="n" style="left:550px;top:352px;width:85px;height:25px;line-height:25px;text-align:center;"><span style="display:inline-block;transform:scaleX(0.88);transform-origin:50% 50%">24/12/02</span></div>
<div class="n" style="left:636px;top:352px;width:76px;height:25px;line-height:25px;text-align:right;color:#000"><span style="display:inline-block;transform:scaleX(0.8);transform-origin:100% 50%">2,718</span></div>
<div class="n" style="left:721px;top:352px;width:76px;height:25px;line-height:25px;text-align:right;color:#000"><span style="display:inline-block;transform:scaleX(0.8);transform-origin:100% 50%">2,697</span></div>
<div class="n" style="left:806px;top:352px;width:75px;height:25px;line-height:25px;text-align:right;color:#000"><span style="display:inline-block;transform:scaleX(0.8);transform-origin:100% 50%">2,751</span></div>
<div class="n" style="left:890px;top:352px;width:79px;height:25px;line-height:25px;text-align:right;color:#0000c8"><span style="display:inline-block;transform:scaleX(0.8);transform-origin:100% 50%">&minus;0,054</span></div>
<div class="n" style="left:550px;top:378px;width:85px;height:25px;line-height:25px;text-align:center;"><span style="display:inline-block;transform:scaleX(0.88);transform-origin:50% 50%">24/11/29</span></div>
<div class="n" style="left:636px;top:378px;width:76px;height:25px;line-height:25px;text-align:right;color:#000"><span style="display:inline-block;transform:scaleX(0.8);transform-origin:100% 50%">2,749</span></div>
<div class="n" style="left:721px;top:378px;width:76px;height:25px;line-height:25px;text-align:right;color:#000"><span style="display:inline-block;transform:scaleX(0.8);transform-origin:100% 50%">2,751</span></div>
<div class="n" style="left:806px;top:378px;width:75px;height:25px;line-height:25px;text-align:right;color:#000"><span style="display:inline-block;transform:scaleX(0.8);transform-origin:100% 50%">2,788</span></div>
<div class="n" style="left:890px;top:378px;width:79px;height:25px;line-height:25px;text-align:right;color:#0000c8"><span style="display:inline-block;transform:scaleX(0.8);transform-origin:100% 50%">&minus;0,037</span></div>
<div class="n" style="left:550px;top:404px;width:85px;height:25px;line-height:25px;text-align:center;"><span style="display:inline-block;transform:scaleX(0.88);transform-origin:50% 50%">24/11/28</span></div>
<div class="n" style="left:636px;top:404px;width:76px;height:25px;line-height:25px;text-align:right;color:#000"><span style="display:inline-block;transform:scaleX(0.8);transform-origin:100% 50%">2,820</span></div>
<div class="n" style="left:721px;top:404px;width:76px;height:25px;line-height:25px;text-align:right;color:#000"><span style="display:inline-block;transform:scaleX(0.8);transform-origin:100% 50%">2,788</span></div>
<div class="n" style="left:806px;top:404px;width:75px;height:25px;line-height:25px;text-align:right;color:#000"><span style="display:inline-block;transform:scaleX(0.8);transform-origin:100% 50%">2,880</span></div>
<div class="n" style="left:890px;top:404px;width:79px;height:25px;line-height:25px;text-align:right;color:#0000c8"><span style="display:inline-block;transform:scaleX(0.8);transform-origin:100% 50%">&minus;0,092</span></div>
<div class="n" style="left:550px;top:430px;width:85px;height:25px;line-height:25px;text-align:center;"><span style="display:inline-block;transform:scaleX(0.88);transform-origin:50% 50%">24/11/27</span></div>
<div class="n" style="left:636px;top:430px;width:76px;height:25px;line-height:25px;text-align:right;color:#000"><span style="display:inline-block;transform:scaleX(0.8);transform-origin:100% 50%">2,883</span></div>
<div class="n" style="left:721px;top:430px;width:76px;height:25px;line-height:25px;text-align:right;color:#000"><span style="display:inline-block;transform:scaleX(0.8);transform-origin:100% 50%">2,880</span></div>
<div class="n" style="left:806px;top:430px;width:75px;height:25px;line-height:25px;text-align:right;color:#000"><span style="display:inline-block;transform:scaleX(0.8);transform-origin:100% 50%">2,903</span></div>
<div class="n" style="left:890px;top:430px;width:79px;height:25px;line-height:25px;text-align:right;color:#0000c8"><span style="display:inline-block;transform:scaleX(0.8);transform-origin:100% 50%">&minus;0,023</span></div>
<div class="n" style="left:550px;top:456px;width:85px;height:25px;line-height:25px;text-align:center;"><span style="display:inline-block;transform:scaleX(0.88);transform-origin:50% 50%">24/11/26</span></div>
<div class="n" style="left:636px;top:456px;width:76px;height:25px;line-height:25px;text-align:right;color:#000"><span style="display:inline-block;transform:scaleX(0.8);transform-origin:100% 50%">2,886</span></div>
<div class="n" style="left:721px;top:456px;width:76px;height:25px;line-height:25px;text-align:right;color:#000"><span style="display:inline-block;transform:scaleX(0.8);transform-origin:100% 50%">2,903</span></div>
<div class="n" style="left:806px;top:456px;width:75px;height:25px;line-height:25px;text-align:right;color:#000"><span style="display:inline-block;transform:scaleX(0.8);transform-origin:100% 50%">2,920</span></div>
<div class="n" style="left:890px;top:456px;width:79px;height:25px;line-height:25px;text-align:right;color:#0000c8"><span style="display:inline-block;transform:scaleX(0.8);transform-origin:100% 50%">&minus;0,017</span></div>
<div class="n" style="left:550px;top:482px;width:85px;height:25px;line-height:25px;text-align:center;"><span style="display:inline-block;transform:scaleX(0.88);transform-origin:50% 50%">24/11/25</span></div>
<div class="n" style="left:636px;top:482px;width:76px;height:25px;line-height:25px;text-align:right;color:#000"><span style="display:inline-block;transform:scaleX(0.8);transform-origin:100% 50%">2,935</span></div>
<div class="n" style="left:721px;top:482px;width:76px;height:25px;line-height:25px;text-align:right;color:#000"><span style="display:inline-block;transform:scaleX(0.8);transform-origin:100% 50%">2,920</span></div>
<div class="n" style="left:806px;top:482px;width:75px;height:25px;line-height:25px;text-align:right;color:#000"><span style="display:inline-block;transform:scaleX(0.8);transform-origin:100% 50%">2,976</span></div>
<div class="n" style="left:890px;top:482px;width:79px;height:25px;line-height:25px;text-align:right;color:#0000c8"><span style="display:inline-block;transform:scaleX(0.8);transform-origin:100% 50%">&minus;0,056</span></div>
<div class="n" style="left:550px;top:508px;width:85px;height:25px;line-height:25px;text-align:center;"><span style="display:inline-block;transform:scaleX(0.88);transform-origin:50% 50%">24/11/22</span></div>
<div class="n" style="left:636px;top:508px;width:76px;height:25px;line-height:25px;text-align:right;color:#000"><span style="display:inline-block;transform:scaleX(0.8);transform-origin:100% 50%">2,979</span></div>
<div class="n" style="left:721px;top:508px;width:76px;height:25px;line-height:25px;text-align:right;color:#000"><span style="display:inline-block;transform:scaleX(0.8);transform-origin:100% 50%">2,976</span></div>
<div class="n" style="left:806px;top:508px;width:75px;height:25px;line-height:25px;text-align:right;color:#000"><span style="display:inline-block;transform:scaleX(0.8);transform-origin:100% 50%">2,978</span></div>
<div class="n" style="left:890px;top:508px;width:79px;height:25px;line-height:25px;text-align:right;color:#0000c8"><span style="display:inline-block;transform:scaleX(0.8);transform-origin:100% 50%">&minus;0,002</span></div>
<div class="n" style="left:550px;top:534px;width:85px;height:25px;line-height:25px;text-align:center;"><span style="display:inline-block;transform:scaleX(0.88);transform-origin:50% 50%">24/11/21</span></div>
<div class="n" style="left:636px;top:534px;width:76px;height:25px;line-height:25px;text-align:right;color:#000"><span style="display:inline-block;transform:scaleX(0.8);transform-origin:100% 50%">2,990</span></div>
<div class="n" style="left:721px;top:534px;width:76px;height:25px;line-height:25px;text-align:right;color:#000"><span style="display:inline-block;transform:scaleX(0.8);transform-origin:100% 50%">2,978</span></div>
<div class="n" style="left:806px;top:534px;width:75px;height:25px;line-height:25px;text-align:right;color:#000"><span style="display:inline-block;transform:scaleX(0.8);transform-origin:100% 50%">3,017</span></div>
<div class="n" style="left:890px;top:534px;width:79px;height:25px;line-height:25px;text-align:right;color:#0000c8"><span style="display:inline-block;transform:scaleX(0.8);transform-origin:100% 50%">&minus;0,039</span></div>
<div class="n" style="left:550px;top:560px;width:85px;height:25px;line-height:25px;text-align:center;"><span style="display:inline-block;transform:scaleX(0.88);transform-origin:50% 50%">24/11/20</span></div>
<div class="n" style="left:636px;top:560px;width:76px;height:25px;line-height:25px;text-align:right;color:#000"><span style="display:inline-block;transform:scaleX(0.8);transform-origin:100% 50%">3,014</span></div>
<div class="n" style="left:721px;top:560px;width:76px;height:25px;line-height:25px;text-align:right;color:#000"><span style="display:inline-block;transform:scaleX(0.8);transform-origin:100% 50%">3,017</span></div>
<div class="n" style="left:806px;top:560px;width:75px;height:25px;line-height:25px;text-align:right;color:#000"><span style="display:inline-block;transform:scaleX(0.8);transform-origin:100% 50%">3,036</span></div>
<div class="n" style="left:890px;top:560px;width:79px;height:25px;line-height:25px;text-align:right;color:#0000c8"><span style="display:inline-block;transform:scaleX(0.8);transform-origin:100% 50%">&minus;0,019</span></div>
<div class="n" style="left:550px;top:586px;width:85px;height:25px;line-height:25px;text-align:center;"><span style="display:inline-block;transform:scaleX(0.88);transform-origin:50% 50%">24/11/19</span></div>
<div class="n" style="left:636px;top:586px;width:76px;height:25px;line-height:25px;text-align:right;color:#000"><span style="display:inline-block;transform:scaleX(0.8);transform-origin:100% 50%">3,045</span></div>
<div class="n" style="left:721px;top:586px;width:76px;height:25px;line-height:25px;text-align:right;color:#000"><span style="display:inline-block;transform:scaleX(0.8);transform-origin:100% 50%">3,036</span></div>
<div class="n" style="left:806px;top:586px;width:75px;height:25px;line-height:25px;text-align:right;color:#000"><span style="display:inline-block;transform:scaleX(0.8);transform-origin:100% 50%">3,063</span></div>
<div class="n" style="left:890px;top:586px;width:79px;height:25px;line-height:25px;text-align:right;color:#0000c8"><span style="display:inline-block;transform:scaleX(0.8);transform-origin:100% 50%">&minus;0,027</span></div>
</body></html>
